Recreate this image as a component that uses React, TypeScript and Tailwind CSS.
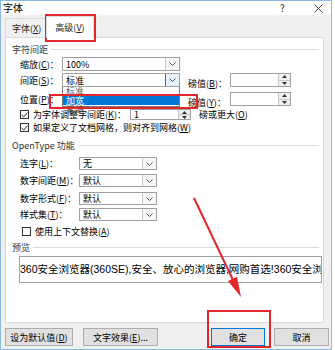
import React from "react";

const Chev = () => (
  <svg width="7" height="4" viewBox="0 0 7 4">
    <path d="M0.5 0.5 L3.5 3.5 L6.5 0.5" fill="none" stroke="#444" strokeWidth="0.9" />
  </svg>
);

const Spin = () => (
  <div className="w-[12px] h-full flex flex-col border-l border-[#c8c8c8] bg-[#f0f0f0]">
    <div className="flex-1 flex items-center justify-center border-b border-[#c8c8c8]">
      <svg width="5" height="3" viewBox="0 0 5 3"><path d="M0 3 L2.5 0 L5 3Z" fill="#333" /></svg>
    </div>
    <div className="flex-1 flex items-center justify-center">
      <svg width="5" height="3" viewBox="0 0 5 3"><path d="M0 0 L2.5 3 L5 0Z" fill="#333" /></svg>
    </div>
  </div>
);

const Combo = ({ w, value, hot }: { w: string; value?: string; hot?: boolean }) => (
  <div className={`${w} h-full flex border border-[#a0a0a0] bg-white`}>
    <div className="flex-1 flex items-center pl-[3px] text-[9px] text-black leading-none">{value}</div>
    <div
      className={
        hot
          ? "w-[14px] h-full flex items-center justify-center bg-[#e5f1fb] border-l border-[#0078d7]"
          : "w-[14px] h-full flex items-center justify-center bg-[#f7f7f7] border-l border-[#c8c8c8]"
      }
    >
      <Chev />
    </div>
  </div>
);

const SpinBox = ({ w, value }: { w: string; value?: string }) => (
  <div className={`${w} h-full flex border border-[#a0a0a0] bg-white`}>
    <div className="flex-1 flex items-center pl-[3px] text-[9px] leading-none">{value}</div>
    <Spin />
  </div>
);

const Check = ({ on }: { on?: boolean }) => (
  <div className="w-[9px] h-[9px] border border-[#333] bg-white flex items-center justify-center shrink-0">
    {on && (
      <svg width="7" height="6" viewBox="0 0 7 6">
        <path d="M0.5 3 L2.6 5 L6.5 0.6" fill="none" stroke="#222" strokeWidth="1" />
      </svg>
    )}
  </div>
);

const Heading = ({ t, cls }: { t: string; cls: string }) => (
  <div className={`${cls} flex items-center pl-[6px] pr-[4px]`}>
    <span className="text-[9px] text-[#333] leading-none whitespace-nowrap">{t}</span>
    <div className="flex-1 h-px bg-[#dcdcdc] ml-[3px]" />
  </div>
);

const Lbl = ({ a, k, w }: { a: string; k: string; w: string }) => (
  <span className={`${w} text-[9px] leading-none whitespace-nowrap text-black`}>
    {a}(<u>{k}</u>)：
  </span>
);

export default function App() {
  return (
    <div className="relative w-[335px] h-[350px] bg-white overflow-hidden font-['Noto_Sans_CJK_SC',sans-serif]">
      <div className="w-[332px] h-[350px] border border-[#8cb8e4] bg-[#f0f0f0] flex flex-col">
        {/* title bar */}
        <div className="h-[14px] bg-white flex items-center relative">
          <span className="ml-[2px] text-[10px] leading-none text-black">字体</span>
          <span className="absolute left-[279px] top-[2px] text-[10px] leading-none text-[#333]">?</span>
          <svg className="absolute left-[313px] top-[3px]" width="9" height="9" viewBox="0 0 9 9">
            <path d="M0.5 0.5 L8.5 8.5 M8.5 0.5 L0.5 8.5" stroke="#333" strokeWidth="0.9" />
          </svg>
        </div>
        {/* tabs */}
        <div className="h-[22px] flex items-end pl-[4px]">
          <div className="w-[41px] h-[19px] border border-b-0 border-[#d9d9d9] bg-[#f0f0f0] flex items-center pl-[6px]">
            <span className="text-[9px] leading-none text-[#222] whitespace-nowrap">字体(<u>X</u>)</span>
          </div>
          <div className="w-[48px] h-[22px] -mb-px bg-white border border-b-0 border-[#d9d9d9] relative z-10 flex items-center justify-center">
            <span className="text-[9px] leading-none text-[#222] whitespace-nowrap">高级(<u>V</u>)</span>
          </div>
        </div>
        {/* panel */}
        <div className="ml-[4px] w-[319px] h-[286px] border border-[#d9d9d9] bg-white flex flex-col">
          <Heading t="字符间距" cls="mt-[4px] h-[14px]" />
          <div className="mt-[1px] h-[14px] flex items-center pl-[14px]">
            <Lbl a="缩放" k="C" w="w-[42px]" />
            <Combo w="w-[118px]" value="100%" />
          </div>
          <div className="mt-[2px] h-[14px] flex items-center pl-[14px]">
            <Lbl a="间距" k="S" w="w-[42px]" />
            <Combo w="w-[118px]" value="标准" hot />
            <span className="ml-[8px]"><Lbl a="磅值" k="B" w="w-[42px] inline-block" /></span>
            <SpinBox w="w-[61px]" />
          </div>
          <div className="mt-[5px] h-[14px] flex items-center pl-[14px]">
            <Lbl a="位置" k="P" w="w-[42px]" />
            <Combo w="w-[118px]" value="标准" />
            <span className="ml-[8px]"><Lbl a="磅值" k="Y" w="w-[42px] inline-block" /></span>
            <SpinBox w="w-[61px]" />
          </div>
          <div className="mt-[2px] h-[13px] flex items-center pl-[14px]">
            <Check on />
            <span className="ml-[4px] w-[97px] text-[9px] leading-none whitespace-nowrap">为字体调整字间距(<u>K</u>)：</span>
            <div className="h-[11px] flex"><SpinBox w="w-[61px]" value="1" /></div>
            <span className="ml-[8px] text-[9px] leading-none whitespace-nowrap">磅或更大(<u>O</u>)</span>
          </div>
          <div className="h-[13px] flex items-center pl-[14px]">
            <Check on />
            <span className="ml-[4px] text-[9px] leading-none whitespace-nowrap">如果定义了文档网格，则对齐到网格(<u>W</u>)</span>
          </div>
          <Heading t="OpenType 功能" cls="mt-[4px] h-[14px]" />
          <div className="mt-[5px] h-[13px] flex items-center pl-[14px]">
            <Lbl a="连字" k="L" w="w-[59px]" />
            <Combo w="w-[78px]" value="无" />
          </div>
          <div className="mt-[4px] h-[13px] flex items-center pl-[14px]">
            <Lbl a="数字间距" k="M" w="w-[59px]" />
            <Combo w="w-[78px]" value="默认" />
          </div>
          <div className="mt-[5px] h-[13px] flex items-center pl-[14px]">
            <Lbl a="数字形式" k="F" w="w-[59px]" />
            <Combo w="w-[78px]" value="默认" />
          </div>
          <div className="mt-[3px] h-[13px] flex items-center pl-[14px]">
            <Lbl a="样式集" k="T" w="w-[59px]" />
            <Combo w="w-[78px]" value="默认" />
          </div>
          <div className="mt-[4px] h-[12px] flex items-center pl-[16px]">
            <Check />
            <span className="ml-[4px] text-[9px] leading-none whitespace-nowrap">使用上下文替换(<u>A</u>)</span>
          </div>
          <Heading t="预览" cls="mt-[3px] h-[14px]" />
          <div className="mt-[2px] ml-[13px] w-[303px] h-[27px] border border-[#a0a0a0] overflow-hidden flex items-center">
            <span className="text-[10.5px] leading-none whitespace-nowrap text-black font-['Liberation_Sans','Noto_Sans_CJK_SC',sans-serif]">
              360安全浏览器(360SE),安全、放心的浏览器,网购首选!360安全浏览器
            </span>
          </div>
        </div>
        {/* buttons */}
        <div className="mt-[5px] h-[18px] flex pl-[4px]">
          <div className="w-[68px] h-full border border-[#adadad] bg-[#e1e1e1] flex items-center justify-center text-[9px] leading-none whitespace-nowrap">设为默认值(<u>D</u>)</div>
          <div className="ml-[10px] w-[75px] h-full border border-[#adadad] bg-[#e1e1e1] flex items-center justify-center text-[9px] leading-none whitespace-nowrap">文字效果(<u>E</u>)...</div>
          <div className="ml-[53px] w-[54px] h-full border border-[#0078d7] bg-[#e1e1e1] flex items-center justify-center text-[9px] leading-none">确定</div>
          <div className="ml-[9px] w-[55px] h-full border border-[#adadad] bg-[#e1e1e1] flex items-center justify-center text-[9px] leading-none">取消</div>
        </div>
      </div>

      {/* dropdown list */}
      <div className="absolute left-[62px] top-[87px] w-[118px] h-[20px] bg-white border border-[#7a7a7a] border-t-0 flex flex-col">
        <div className="h-[9px] pl-[3px] flex items-center text-[9px] leading-none text-[#555]">标准</div>
        <div className="h-[10px] pl-[3px] flex items-center text-[9px] leading-none bg-[#0078d7] text-white">加宽</div>
        <div className="h-[8px] pl-[3px] flex items-start text-[9px] leading-none text-[#444] overflow-visible">紧缩</div>
      </div>

      {/* red annotations */}
      <div className="absolute left-[45px] top-[14px] w-[51px] h-[28px] border-2 border-[#e3262b]" />
      <div className="absolute left-[49px] top-[94px] w-[149px] h-[15px] border-2 border-[#e3262b]" />
      <div className="absolute left-[207px] top-[310px] w-[64px] h-[38px] border-2 border-[#e3262b]" />
      <svg className="absolute left-0 top-0" width="335" height="350" viewBox="0 0 335 350">
        <line x1="194" y1="198" x2="233" y2="280" stroke="#e3262b" strokeWidth="2" />
        <polygon points="241,297 237,276.8 228,281" fill="#e3262b" />
      </svg>
    </div>
  );
}
